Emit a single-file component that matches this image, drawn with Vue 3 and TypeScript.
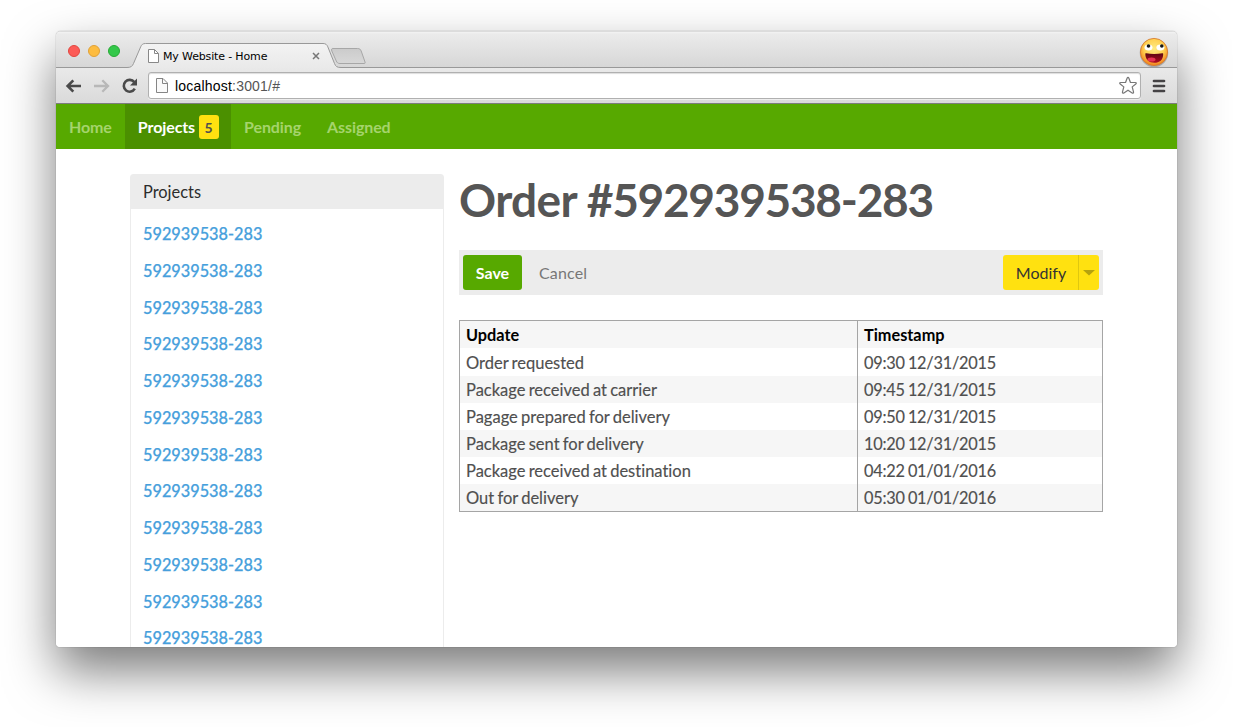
<script setup lang="ts">
interface NavItem {
  label: string
  badge?: number
  active?: boolean
}

interface UpdateRow {
  update: string
  timestamp: string
}

const navItems: NavItem[] = [
  { label: 'Home' },
  { label: 'Projects', badge: 5, active: true },
  { label: 'Pending' },
  { label: 'Assigned' },
]

const projects: string[] = Array.from({ length: 12 }, () => '592939538-283')

const rows: UpdateRow[] = [
  { update: 'Order requested', timestamp: '09:30 12/31/2015' },
  { update: 'Package received at carrier', timestamp: '09:45 12/31/2015' },
  { update: 'Pagage prepared for delivery', timestamp: '09:50 12/31/2015' },
  { update: 'Package sent for delivery', timestamp: '10:20 12/31/2015' },
  { update: 'Package received at destination', timestamp: '04:22 01/01/2016' },
  { update: 'Out for delivery', timestamp: '05:30 01/01/2016' },
]
</script>

<template>
  <div class="desktop">
    <div class="window">
      <div class="tabstrip">
        <svg class="tabshape" width="1121" height="37" viewBox="0 0 1121 37">
          <defs>
            <linearGradient id="tabfill" x1="0" y1="0" x2="0" y2="1">
              <stop offset="0" stop-color="#f3f3f3" />
              <stop offset="1" stop-color="#e9e9e9" />
            </linearGradient>
            <linearGradient id="newtab" x1="0" y1="0" x2="0" y2="1">
              <stop offset="0" stop-color="#cbcbcb" />
              <stop offset="1" stop-color="#d8d8d8" />
            </linearGradient>
          </defs>
          <path d="M0 36.5H71C75 36.5 76.3 35.3 77.5 32.5L84.7 15.8C85.7 13.5 86.8 12.5 89.5 12.5H267C269.500 12.500 270.900 13.500 271.800 15.800L278.500 32.500C279.700 35.500 281 36.500 285 36.500H1121V38H0Z" fill="url(#tabfill)" stroke="#999" />
          <path d="M279.500 17.500H304C306 17.500 307 18.200 307.700 20L311.500 31C312 32.700 311.300 32.500 309.500 32.500H286.500C284.500 32.500 283.500 31.800 282.800 30L278.300 20C277.700 18.300 278 17.500 279.500 17.500Z" transform="translate(-2.500 0)" fill="url(#newtab)" stroke="#a7a7a7" />
        </svg>
        <div class="lights">
          <span class="light red"></span>
          <span class="light amber"></span>
          <span class="light green"></span>
        </div>
        <div class="tab">
          <svg class="doc" width="12" height="15" viewBox="0 0 12 15">
            <path d="M.5 .5H6.500L10.500 4.500V13.500H.5Z" fill="#fff" stroke="#888" />
            <path d="M6.500 .5V4.500H10.500" fill="none" stroke="#888" />
          </svg>
          <span class="tabtitle">My Website - Home</span>
          <svg class="close" width="8" height="8" viewBox="0 0 8 8">
            <path d="M1 1L7 7M7 1L1 7" stroke="#777" stroke-width="1.500" />
          </svg>
        </div>
        <svg class="face" width="32" height="32" viewBox="0 0 32 32">
          <defs>
            <radialGradient id="skin" cx=".5" cy=".38" r=".62">
              <stop offset="0" stop-color="#ffeb83" />
              <stop offset=".6" stop-color="#ffce4e" />
              <stop offset="1" stop-color="#ef7d1a" />
            </radialGradient>
            <linearGradient id="mouth" x1="0" y1="0" x2="0" y2="1">
              <stop offset="0" stop-color="#5c0713" />
              <stop offset="1" stop-color="#b10b20" />
            </linearGradient>
          </defs>
          <circle cx="16" cy="16.800" r="14.300" fill="#000" opacity=".22" />
          <circle cx="16" cy="16" r="13.600" fill="url(#skin)" stroke="#d9772a" stroke-width=".8" />
          <path d="M7.300 17.800C7.300 17.300 7.700 17.200 8.300 17.200C13 18.200 19 18.200 24.300 17.200C25 17.200 25.300 17.400 25.200 18C25.200 24 21.500 26.800 16.300 26.800S7.300 24 7.300 17.800Z" fill="url(#mouth)" />
          <ellipse cx="13.500" cy="23.600" rx="4" ry="2" fill="#e63352" />
          <ellipse cx="10.500" cy="11.400" rx="4" ry="3" fill="#fff" />
          <ellipse cx="22.400" cy="11.400" rx="4" ry="3" fill="#fff" />
          <circle cx="10.500" cy="10" r="1.800" fill="#171717" />
          <circle cx="23.800" cy="10" r="1.800" fill="#171717" />
        </svg>
      </div>

      <div class="toolbar">
        <svg class="navicons" width="92" height="34" viewBox="0 0 92 34">
          <path d="M25 17H12M17.300 11.300L11.600 17L17.300 22.700" fill="none" stroke="#4a4a4a" stroke-width="2.600" />
          <path d="M38 17H51M46.300 11.300L52 17L46.300 22.700" fill="none" stroke="#b8b8b8" stroke-width="2.300" />
          <path d="M78.300 13.100A5.900 5.900 0 1 0 78.800 19.700" fill="none" stroke="#4a4a4a" stroke-width="2.600" />
          <path d="M81 9.500V16.500H74Z" fill="#4a4a4a" />
        </svg>
        <div class="address">
          <svg class="doc" width="13" height="16" viewBox="0 0 13 16">
            <path d="M.5 .5H7L11.500 5V14.500H.5Z" fill="#fafafa" stroke="#858585" />
            <path d="M6.500 .5V5.500H11.500" fill="none" stroke="#858585" />
          </svg>
          <span class="url">localhost<span class="port">:3001/#</span></span>
          <svg class="star" width="20" height="19" viewBox="0 0 20 19">
            <path d="M10 1.300C10.500 1.300 10.700 1.700 10.900 2.200L12.400 6.300L17.200 6.500C18.500 6.600 18.700 7.300 17.800 8L14.200 10.900L15.500 15.800C15.800 17 15.100 17.500 14.100 16.900L10 14.200L5.900 16.900C4.900 17.500 4.200 17 4.500 15.800L5.800 10.900L2.200 8C1.300 7.300 1.500 6.600 2.800 6.500L7.600 6.300L9.100 2.200C9.300 1.700 9.500 1.300 10 1.300Z" fill="#fff" stroke="#777" stroke-width="1.200" />
          </svg>
        </div>
        <svg class="burger" width="14" height="14" viewBox="0 0 14 14">
          <path d="M2 2H12M2 7H12M2 12H12" stroke="#454345" stroke-width="2.700" stroke-linecap="round" />
        </svg>
      </div>

      <nav class="nav">
        <a v-for="item in navItems" :key="item.label" class="navitem" :class="{ active: item.active }">
          <span>{{ item.label }}</span>
          <span v-if="item.badge" class="badge">{{ item.badge }}</span>
        </a>
      </nav>

      <main class="page">
        <aside class="panel">
          <header class="panelhead">Projects</header>
          <div class="links">
            <a v-for="(project, i) in projects" :key="i" class="link">{{ project }}</a>
          </div>
        </aside>

        <section class="content">
          <h1 class="title">Order <span class="number">#592939538-283</span></h1>
          <div class="actions">
            <button class="save">Save</button>
            <button class="cancel">Cancel</button>
            <div class="split">
              <button class="modify">Modify</button>
              <button class="more" aria-label="More">
                <svg width="12" height="6" viewBox="0 0 12 6"><path d="M0 0H12L6 5.500Z" fill="#b5a20f" /></svg>
              </button>
            </div>
          </div>
          <table class="table">
            <thead>
              <tr><th class="first">Update</th><th>Timestamp</th></tr>
            </thead>
            <tbody>
              <tr v-for="row in rows" :key="row.update">
                <td>{{ row.update }}</td>
                <td class="time">{{ row.timestamp }}</td>
              </tr>
            </tbody>
          </table>
        </section>
      </main>
    </div>
  </div>
</template>

<style>
body {
  background: #fff;
  overflow: hidden;
}
</style>

<style scoped>
* {
  box-sizing: border-box;
}
.desktop {
  width: 1233px;
  height: 727px;
  padding: 31px 56px 0;
  overflow: hidden;
  font-family: Lato, sans-serif;
  font-size: 16px;
  font-variant-ligatures: none;
  color: #4f4f4f;
}
.window {
  width: 1121px;
  height: 616px;
  border-radius: 5px 5px 4px 4px;
  box-shadow: 0 0 1px rgba(0, 0, 0, 0.55), 0 24px 50px rgba(0, 0, 0, 0.52);
}
.tabstrip {
  position: relative;
  display: flex;
  height: 37px;
  border-radius: 5px 5px 0 0;
  background: linear-gradient(#dcdcdc 0, #dcdcdc 1px, #f3f3f3 1px, #ebebeb 3px, #d6d6d6 100%);
}
.tabshape {
  position: absolute;
  left: 0;
  top: 0;
}
.lights {
  display: flex;
  gap: 8px;
  padding: 14px 0 0 12px;
  width: 92px;
}
.light {
  width: 12px;
  height: 12px;
  border-radius: 50%;
}
.red {
  background: #fc5b57;
  border: 1px solid #e2463f;
}
.amber {
  background: #fdbc40;
  border: 1px solid #e0a137;
}
.green {
  background: #34c84a;
  border: 1px solid #27aa35;
}
.tab {
  position: relative;
  display: flex;
  align-items: center;
  width: 172px;
  height: 24px;
  margin-top: 13px;
}
.doc {
  flex: none;
}
.tabtitle {
  margin-left: 3px;
  padding-top: 1px;
  font-family: "DejaVu Sans", sans-serif;
  font-size: 11px;
  line-height: 15px;
  letter-spacing: -0.15px;
  white-space: nowrap;
  color: #000;
  width: 149px;
}
.close {
  flex: none;
}
.face {
  position: relative;
  margin: 5px 7px 0 auto;
}
.toolbar {
  display: flex;
  align-items: center;
  height: 36px;
  border-bottom: 1px solid #7d7d7d;
  background: linear-gradient(#e9e9e9, #dadada);
}
.navicons {
  flex: none;
}
.address {
  display: flex;
  align-items: center;
  width: 993px;
  height: 27px;
  padding: 0 2px 0 7px;
  border: 1px solid #b0b0b0;
  border-radius: 3px;
  background: #fff;
  box-shadow: inset 0 1px 1px #ddd, 0 1px 0 #eee;
}
.url {
  margin-left: 6px;
  padding-top: 1px;
  font-family: "Liberation Sans", Arial, sans-serif;
  font-size: 14px;
  color: #000;
  letter-spacing: 0.2px;
}
.port {
  color: #555;
}
.star {
  margin-left: auto;
}
.burger {
  margin-left: 11px;
}
.nav {
  display: flex;
  height: 45px;
  background: #57a900;
}
.navitem {
  display: flex;
  align-items: center;
  padding: 0 13px;
  gap: 4px;
  font-weight: 700;
  line-height: 24px;
  letter-spacing: -0.1px;
  color: #a5d46c;
}
.active {
  color: #fff;
  background: #4b9000;
  padding: 0 12px 0 13px;
}
.badge {
  width: 20px;
  height: 24px;
  margin-top: 1px;
  padding-right: 1px;
  border-radius: 3px;
  background: #ffe110;
  color: #4f4f4f;
  font-size: 14px;
  line-height: 25px;
  text-align: center;
}
.page {
  display: flex;
  height: 498px;
  padding: 25px 74px 0;
  gap: 15px;
  overflow: hidden;
  background: #fff;
  border-radius: 0 0 4px 4px;
}
.panel {
  flex: none;
  width: 314px;
  height: 520px;
  border: 1px solid #ececec;
  border-radius: 3px 3px 0 0;
}
.panelhead {
  height: 34px;
  padding-left: 12px;
  font-size: 16.4px;
  line-height: 34px;
  background: #ececec;
  color: #2c2c2c;
}
.links {
  display: flex;
  flex-direction: column;
  padding: 7px 12px 0;
}
.link {
  height: 36.75px;
  line-height: 36px;
  font-size: 16.3px;
  font-weight: 500;
  -webkit-text-stroke: 0.25px #479fdc;
  color: #479fdc;
}
.content {
  flex: none;
  width: 644px;
}
.title {
  margin: 0;
  height: 76px;
  font-size: 46px;
  line-height: 52px;
  font-weight: 700;
  letter-spacing: -0.6px;
  white-space: nowrap;
  color: #555;
}
.number {
  letter-spacing: -1.28px;
}
.actions {
  display: flex;
  align-items: center;
  height: 45px;
  padding: 0 4px;
  background: #ececec;
}
button {
  margin: 0;
  padding: 0;
  border: 0;
  height: 35px;
  font: inherit;
  font-variant-ligatures: none;
}
.save {
  width: 59px;
  border-radius: 3px;
  background: #57a900;
  color: #fff;
  font-weight: 700;
}
.cancel {
  margin-left: 17px;
  background: none;
  color: #777;
  letter-spacing: 0.15px;
}
.split {
  display: flex;
  margin-left: auto;
}
.modify {
  width: 75px;
  padding-left: 1px;
  border-radius: 3px 0 0 3px;
  background: #ffe110;
  color: #333;
}
.more {
  display: flex;
  align-items: center;
  justify-content: center;
  width: 21px;
  border-left: 1px solid #dfc70f;
  border-radius: 0 3px 3px 0;
  background: #ffe110;
}
.table {
  width: 644px;
  margin-top: 25px;
  border: 1px solid #a5a5a5;
  border-collapse: separate;
  border-spacing: 0;
  table-layout: fixed;
}
th,
td {
  height: 27px;
  padding: 0 6px;
  line-height: 26px;
  text-align: left;
}
td {
  font-size: 16.5px;
  line-height: 25px;
  vertical-align: baseline;
  word-spacing: -1px;
  -webkit-text-stroke: 0.15px #4f4f4f;
}
.first {
  width: 397px;
}
th {
  font-size: 16.3px;
  font-weight: 700;
  color: #000;
  background: #f6f6f6;
}
th + th,
td + td {
  border-left: 1px solid #a5a5a5;
}
.time {
  font-size: 16.3px;
  line-height: 27px;
  word-spacing: -0.8px;
  letter-spacing: -0.22px;
}
tbody tr:first-child td {
  height: 28px;
  padding-top: 1px;
}
tbody tr:nth-child(even) {
  background: #f6f6f6;
}
</style>
